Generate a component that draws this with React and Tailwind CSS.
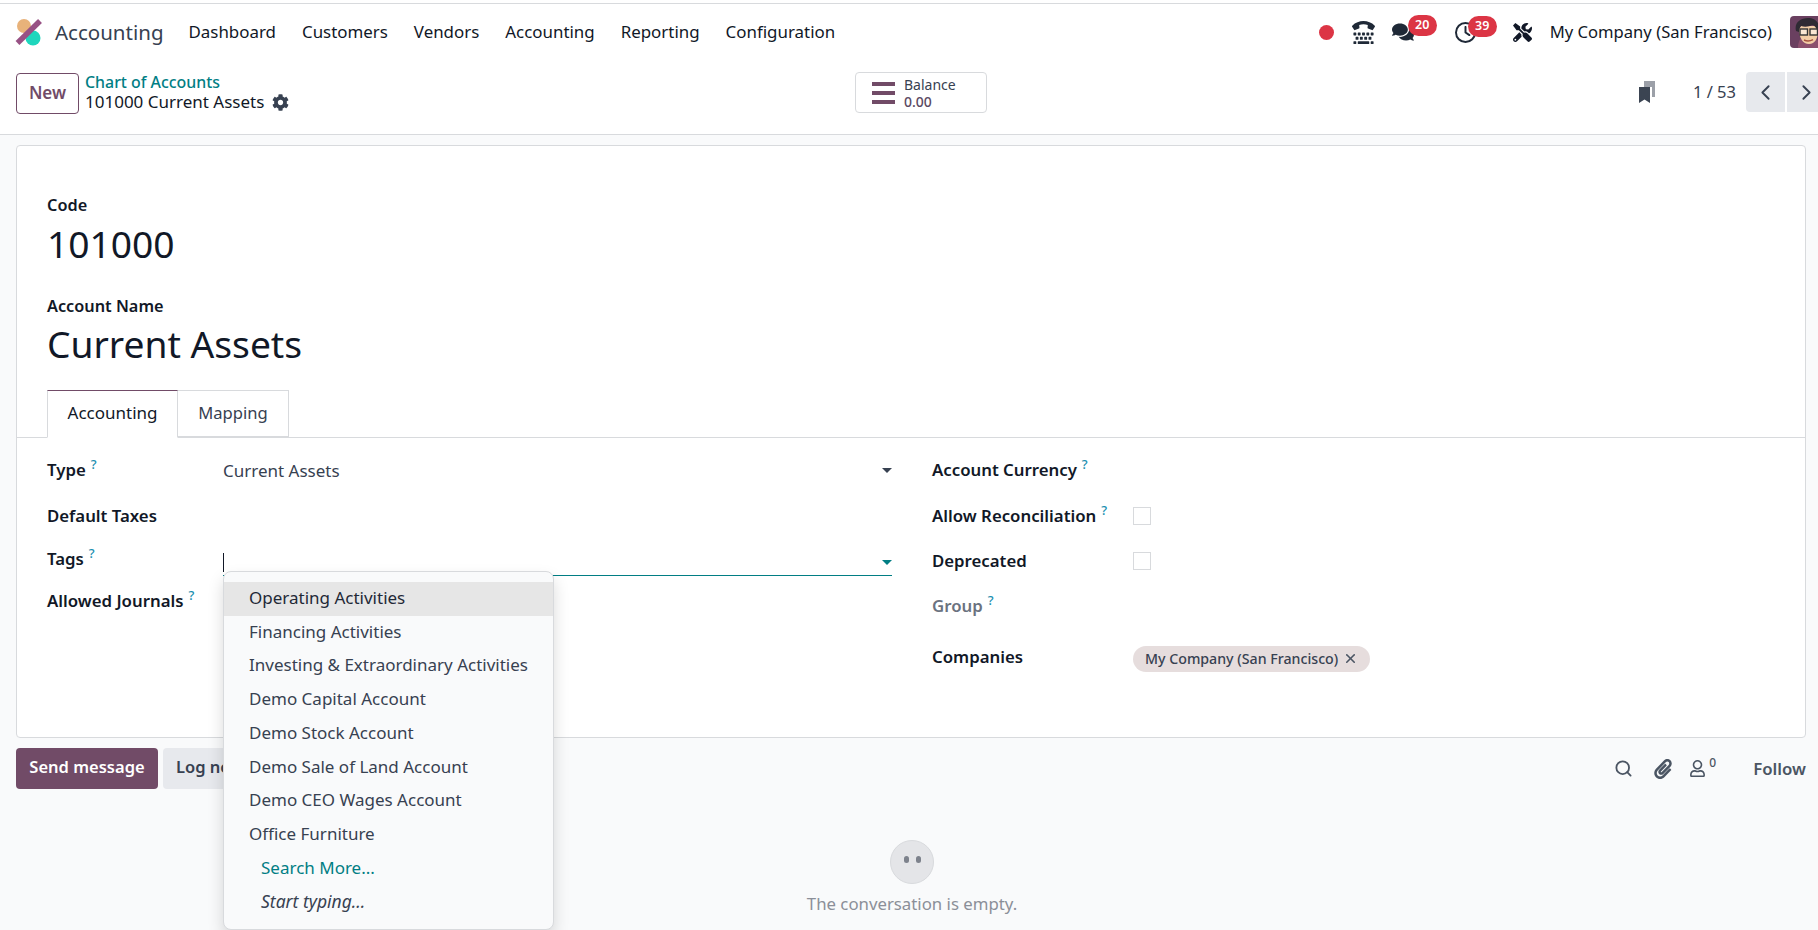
import React from 'react';
import { FaCog, FaTty, FaComments, FaTools, FaPaperclip, FaRegUser } from 'react-icons/fa';
import { FaRegClock } from 'react-icons/fa6';
import { ChevronLeft, ChevronRight, Search, X } from 'lucide-react';

const NAV = ['Dashboard', 'Customers', 'Vendors', 'Accounting', 'Reporting', 'Configuration'];
const TAGS = [
  'Operating Activities',
  'Financing Activities',
  'Investing & Extraordinary Activities',
  'Demo Capital Account',
  'Demo Stock Account',
  'Demo Sale of Land Account',
  'Demo CEO Wages Account',
  'Office Furniture',
];

function Help() {
  return <sup className="ml-[5px] text-[13px] font-medium text-[#1a8fb0] -top-[7px]">?</sup>;
}

function Caret({ teal }) {
  return (
    <svg width="10" height="5" viewBox="0 0 10 5" className="shrink-0">
      <path d="M0 0h10L5 5z" fill={teal ? '#017e84' : '#374151'} />
    </svg>
  );
}

function Logo() {
  return (
    <svg width="28" height="28" viewBox="0 0 28 28" className="shrink-0">
      <circle cx="9" cy="8" r="7" fill="#e8b27a" />
      <circle cx="18" cy="20" r="7.5" fill="#1ed6bd" />
      <path d="M25 3 2.5 25" stroke="#985184" strokeWidth="5.5" />
    </svg>
  );
}

function Avatar() {
  return (
    <svg width="32" height="32" viewBox="0 0 32 32" className="shrink-0 rounded-[4px]">
      <rect width="32" height="32" fill="#6a4060" />
      <path d="M8 32c0-6 2-9 4-11h12c3 2 6 5 6 11z" fill="#8c4f6d" />
      <path d="M9 13c0 9 4 15 10 15s9-6 9-13l-2-5H11z" fill="#f3cda6" />
      <path d="M6 15C4 7 10 2 18 2c6 0 11 3 11 10l-2 2c-1-3-3-5-5-5-3 2-8 2-11 1-1 1-2 3-2 6z" fill="#2f2a33" />
      <rect x="10" y="13" width="7.5" height="6" fill="#fff" fillOpacity=".5" stroke="#333" strokeWidth="1.4" />
      <rect x="20" y="13" width="7.5" height="6" fill="#fff" fillOpacity=".5" stroke="#333" strokeWidth="1.4" />
      <path d="M14 24c3 1.4 6 1.2 9-.4" stroke="#a5533f" strokeWidth="1.4" fill="none" />
    </svg>
  );
}

function Bookmarks() {
  return (
    <svg width="16" height="22" viewBox="0 0 16 22">
      <path d="M5 0h11v16h-3V6H5z" fill="#9ca0a8" />
      <path d="M0 6h11v16l-5.500-3.500L0 22z" fill="#3b4452" />
    </svg>
  );
}

function Row({ label, help, muted, h, w, children }) {
  return (
    <div className={`flex items-center ${h}`}>
      <div className={`${w} shrink-0 text-[16.800px] font-semibold ${muted ? 'text-[#6b7280]' : 'text-[#111827]'}`}>
        {label}{help && <Help />}
      </div>
      {children}
    </div>
  );
}

function Check() {
  return <span className="block w-[18px] h-[18px] bg-white border border-[#d8dadd]" />;
}

export default function App() {
  return (
    <div className="relative w-[1818px] h-[930px] overflow-hidden bg-[#f9fafb] text-[16px] text-[#374151] font-['Noto_Sans',sans-serif]">
      <div className="h-[3px] bg-white" />
      <header className="h-[57px] flex items-center bg-white border-t border-[#d8dadd] pl-[15px] text-[#111827]">
        <Logo />
        <span className="ml-[12px] mr-[25px] text-[20.500px] text-[#374151]">Accounting</span>
        <nav className="flex gap-[26px] text-[16.900px]">
          {NAV.map(n => <a key={n}>{n}</a>)}
        </nav>
        <div className="ml-auto -mr-[4px] flex items-center">
          <span className="w-[15px] h-[15px] rounded-full bg-[#dc3545]" />
          <FaTty className="ml-[18px] text-[23px] text-[#1f2937]" />
          <div className="relative ml-[17px]">
            <FaComments className="text-[22px] text-[#1f2937]" />
            <span className="absolute left-[16px] -top-[6px] w-[29px] h-[21px] rounded-full bg-[#dc3545] text-white text-[12.500px] font-semibold flex items-center justify-center">20</span>
          </div>
          <div className="relative ml-[41px]">
            <FaRegClock className="text-[21px] text-[#1f2937]" />
            <span className="absolute left-[13px] -top-[6px] w-[29px] h-[21px] rounded-full bg-[#dc3545] text-white text-[12.500px] font-semibold flex items-center justify-center">39</span>
          </div>
          <FaTools className="ml-[37px] text-[19px] text-[#111827]" />
          <span className="ml-[18px] mr-[18px] text-[16.600px]">My Company (San Francisco)</span>
          <Avatar />
        </div>
      </header>

      <div className="h-[75px] flex items-start pt-[12px] bg-white border-b border-[#d8dadd] pl-[16px]">
        <div className="w-[839px] flex items-center">
          <button className="w-[63px] h-[41px] rounded-[4px] bg-white border border-[#714b67] text-[#714b67] text-[17px] font-semibold">New</button>
          <div className="ml-[6px] pb-[2px] leading-[20px]">
            <div className="text-[#017e84] text-[15.900px] font-medium">Chart of Accounts</div>
            <div className="flex items-center text-[#111827] text-[17px]">
              101000 Current Assets
              <FaCog className="ml-[8px] text-[17px] text-[#374151]" />
            </div>
          </div>
        </div>
        <div className="w-[132px] h-[41px] flex items-center rounded-[4px] border border-[#d8dadd] bg-white pl-[16px]">
          <span className="flex flex-col gap-[5px]">
            <span className="block w-[23px] h-[4px] bg-[#714b67]" />
            <span className="block w-[23px] h-[4px] bg-[#714b67]" />
            <span className="block w-[23px] h-[4px] bg-[#714b67]" />
          </span>
          <div className="ml-[9px] text-[14px] leading-[17px]">
            <div>Balance</div>
            <div className="font-medium text-[#5b4a63]">0.00</div>
          </div>
        </div>
        <div className="ml-auto -mr-[8px] flex items-center">
          <Bookmarks />
          <span className="ml-[38px] mr-[10px] text-[16.500px]">1 / 53</span>
          <span className="w-[39px] h-[40px] rounded-l-[4px] bg-[#e7e9ed] flex items-center justify-center"><ChevronLeft size={25} strokeWidth={1.800} /></span>
          <span className="ml-[2px] w-[39px] h-[40px] rounded-r-[4px] bg-[#e7e9ed] flex items-center justify-center"><ChevronRight size={25} strokeWidth={1.800} /></span>
        </div>
      </div>

      <main className="ml-[16px] mr-[12px] mt-[10px] h-[593px] rounded-[4px] bg-white border border-[#d8dadd]">
        <div className="pl-[30px] pt-[47px]">
          <div className="font-semibold text-[16.300px] leading-[24px] text-[#111827]">Code</div>
          <div className="mt-[4px] text-[37.200px] leading-[46px] text-[#111827]">101000</div>
          <div className="mt-[27px] font-semibold text-[16.300px] leading-[24px] text-[#111827]">Account Name</div>
          <div className="mt-[3px] text-[37.200px] leading-[46px] text-[#111827]">Current Assets</div>
        </div>
        <div className="mt-[23px] pl-[30px] h-[48px] flex border-b border-[#d8dadd]">
          <div className="w-[131px] h-[48px] pb-[2px] flex items-center justify-center bg-white border border-[#d8dadd] border-t-[#714b67] border-b-white text-[17px] text-[#111827]">Accounting</div>
          <div className="w-[111px] h-[47px] flex items-center justify-center border-y border-r border-[#d8dadd] text-[16.600px]">Mapping</div>
        </div>
        <div className="flex pl-[30px] pt-[9px]">
          <div className="w-[845px]">
            <Row label="Type" help h="h-[46px]" w="w-[176px]">
              <span className="flex-1 mt-[1px] text-[17px]">Current Assets</span>
              <Caret />
            </Row>
            <Row label="Default Taxes" h="h-[46px]" w="w-[176px]" />
            <Row label="Tags" help h="h-[40px]" w="w-[176px]">
              <div className="flex-1 self-start h-[37px] flex items-center pt-[10px] border-b border-[#017e84]">
                <span className="w-px h-[19px] bg-[#111827]" />
                <span className="ml-auto"><Caret teal /></span>
              </div>
            </Row>
            <Row label="Allowed Journals" help h="h-[44px]" w="w-[176px]" />
          </div>
          <div className="ml-[40px]">
            <Row label="Account Currency" help h="h-[46px]" w="w-[201px]" />
            <Row label="Allow Reconciliation" help h="h-[46px]" w="w-[201px]"><Check /></Row>
            <Row label="Deprecated" h="h-[44px]" w="w-[201px]"><Check /></Row>
            <Row label="Group" help muted h="h-[46px]" w="w-[201px]" />
            <Row label="Companies" h="h-[56px]" w="w-[201px]">
              <span className="mt-[3px] h-[26px] w-[237px] pl-[12px] flex items-center rounded-full bg-[#e6dddd] text-[14.200px] font-medium">
                My Company (San Francisco)
                <X size={15} strokeWidth={2.500} className="ml-[5px] text-[#4b5563]" />
              </span>
            </Row>
          </div>
        </div>
      </main>

      <section className="pt-[10px]">
        <div className="flex items-center pl-[16px] pr-[12px] h-[41px]">
          <button className="w-[142px] h-[41px] pb-[2px] rounded-[4px] bg-[#714b67] text-white text-[16.500px] font-semibold">Send message</button>
          <button className="ml-[5px] w-[110px] h-[41px] pb-[2px] pl-[13px] text-left rounded-[4px] bg-[#e7e9ed] text-[#374151] text-[16.500px] font-semibold">Log note</button>
          <div className="ml-auto flex items-center text-[#4b5563]">
            <Search size={19} strokeWidth={2.300} />
            <FaPaperclip className="ml-[20px] text-[20px]" />
            <FaRegUser className="ml-[16px] text-[17px]" />
            <span className="text-[12px] -mt-[12px] ml-[3px] font-medium">0</span>
            <span className="ml-[37px] text-[16.800px] font-semibold">Follow</span>
          </div>
        </div>
        <div className="mt-[51px] pl-[6px] flex flex-col items-center">
          <div className="w-[44px] h-[44px] rounded-full bg-[#e4e5e8] border border-[#d8dadd] flex items-center justify-center gap-[7px] pb-[5px]">
            <span className="w-[5px] h-[7px] rounded-full bg-[#7d828c]" />
            <span className="w-[5px] h-[7px] rounded-full bg-[#7d828c]" />
          </div>
          <p className="mt-[7px] text-[#8b8f98] text-[16.800px]">The conversation is empty.</p>
        </div>
      </section>

      <div className="absolute left-[223px] top-[571px] w-[331px] h-[359px] pt-[10px] rounded-lg bg-[#f9fafb] border border-[#d8dadd] shadow-[0_8px_16px_rgba(0,0,0,0.15)]">
        <ul className="text-[17px]">
          {TAGS.map((t, i) => (
            <li key={t} className={`h-[33.700px] pb-[2px] pl-[25px] flex items-center ${i === 0 ? 'bg-[#e6e6e6] text-[#1f2937]' : ''}`}>{t}</li>
          ))}
          <li className="h-[33.700px] pb-[2px] pl-[37px] flex items-center text-[#017e84]">Search More...</li>
          <li className="h-[33.700px] pb-[2px] pl-[37px] flex items-center italic text-[17.500px]">Start typing...</li>
        </ul>
      </div>
    </div>
  );
}
